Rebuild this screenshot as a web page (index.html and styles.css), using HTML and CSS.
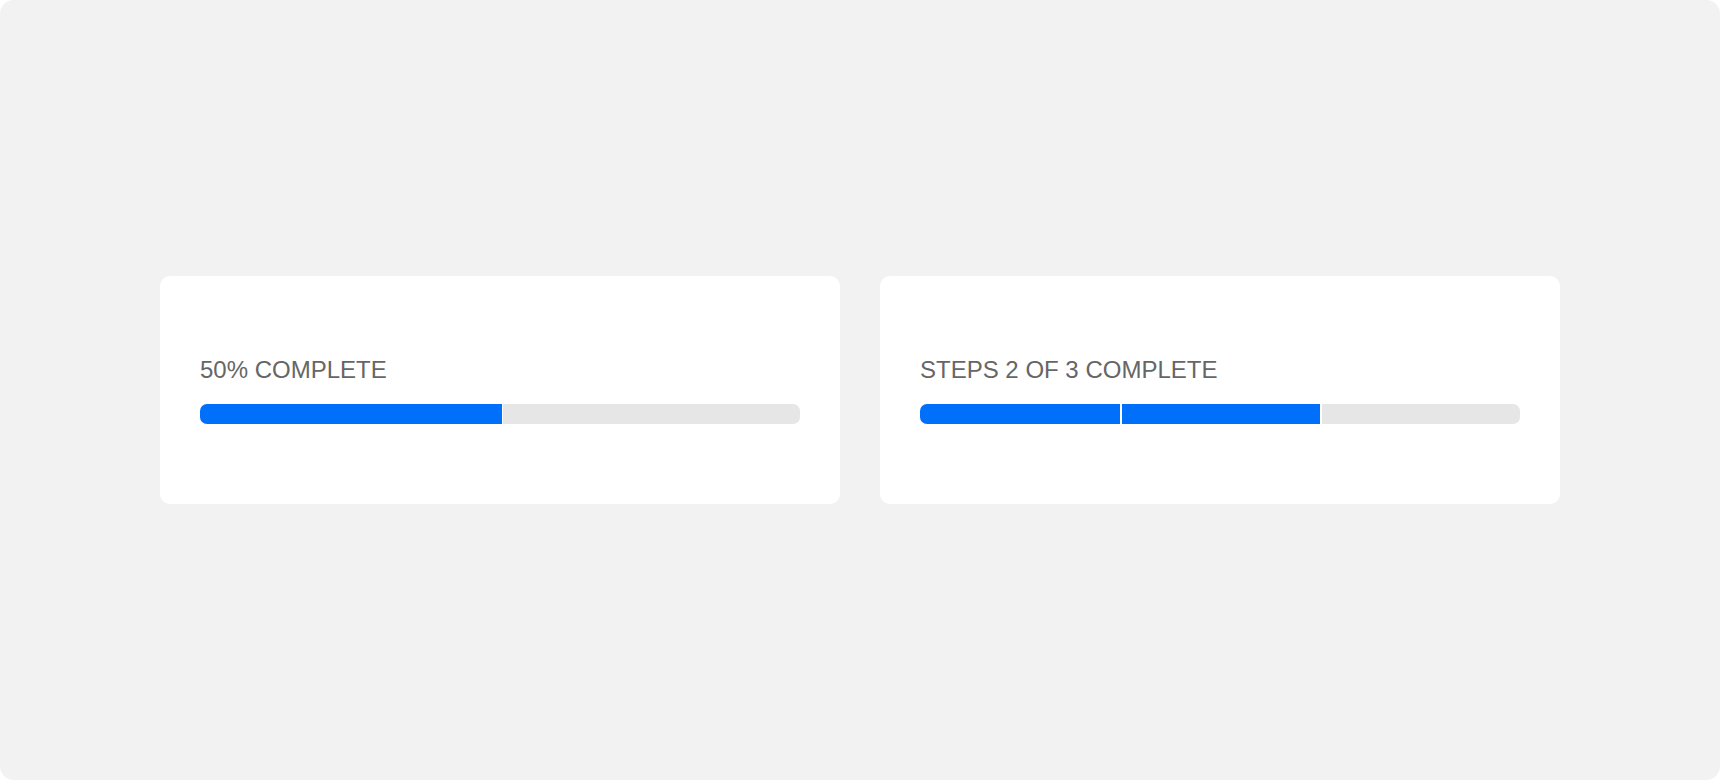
FILE: index.html
```html
<!DOCTYPE html>
<html lang="en">
<head>
<meta charset="utf-8">
<title>Progress</title>
<link rel="stylesheet" href="styles.css">
</head>
<body>
<div class="canvas">
  <div class="card">
    <div class="label">50% COMPLETE</div>
    <div class="bar">
      <div class="seg fill half"></div>
      <div class="seg rest"></div>
    </div>
  </div>
  <div class="card">
    <div class="label">STEPS 2 OF 3 COMPLETE</div>
    <div class="bar steps">
      <div class="seg fill first"></div>
      <div class="seg fill"></div>
      <div class="seg rest"></div>
    </div>
  </div>
</div>
</body>
</html>
```

FILE: styles.css
```css
html, body {
  margin: 0;
  padding: 0;
  background: #ffffff;
}
.canvas {
  width: 1720px;
  height: 780px;
  box-sizing: border-box;
  background: #f2f2f2;
  border-radius: 14px;
  display: flex;
  align-items: center;
  justify-content: center;
  gap: 40px;
  font-family: "Liberation Sans", Arial, sans-serif;
}
.card {
  width: 680px;
  box-sizing: border-box;
  background: #ffffff;
  border-radius: 10px;
  padding: 80px 40px;
}
.label {
  font-size: 24px;
  color: #666666;
  line-height: normal;
  margin-bottom: 20px;
}
.bar {
  display: flex;
  height: 20px;
  gap: 1px;
  border-radius: 7px;
  overflow: hidden;
}
.bar.steps {
  gap: 2px;
}
.seg {
  height: 100%;
  flex: 1 1 0;
}
.fill {
  background: #006ff9;
}
.rest {
  background: #e6e6e6;
}
.half {
  flex: 0 0 302px;
}
.first {
  flex: 0 0 200px;
}
```
